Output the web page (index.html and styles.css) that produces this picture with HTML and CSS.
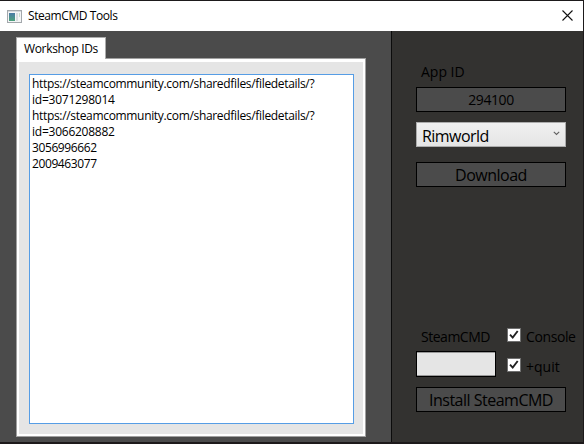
FILE: index.html
```html
<!DOCTYPE html>
<html lang="en">
<head>
<meta charset="utf-8">
<title>SteamCMD Tools</title>
<link rel="stylesheet" href="styles.css">
</head>
<body>
<div class="window">
  <header class="titlebar">
    <svg class="app-icon" width="15" height="13" viewBox="0 0 15 13">
      <defs><linearGradient id="pane" x1="0" y1="0" x2="0" y2="1"><stop offset="0" stop-color="#4b7ba6"/><stop offset="1" stop-color="#4da27c"/></linearGradient></defs>
      <rect x=".5" y=".5" width="14" height="12" fill="#f4f5f6" stroke="#a3a8ac"/>
      <rect x="1" y="1" width="13" height="1" fill="#d5d9dc"/>
      <rect x="2" y="3" width="6" height="8" fill="url(#pane)"/>
      <rect x="9" y="3" width="2" height="8" fill="#d9dcdf"/>
      <rect x="12" y="3" width="1" height="4" fill="#c9dccd"/>
    </svg>
    <h1 class="title"><span>SteamCMD Tools</span></h1>
    <svg class="close" width="11" height="11" viewBox="0 0 11 11"><path d="M.5 .5 10.5 10.5M10.5 .5 .5 10.5" stroke="#111" stroke-width="1.1"/></svg>
  </header>
  <main class="content">
    <section class="left">
      <div class="tab"><span>Workshop IDs</span></div>
      <div class="pane">
        <div class="ids"><span class="url">https://steamcommunity.com/sharedfiles/filedetails/?</span><br><span class="query">id=3071298014</span><br><span class="url">https://steamcommunity.com/sharedfiles/filedetails/?</span><br><span class="query">id=3066208882</span><br><span>3056996662</span><br><span>2009463077</span></div>
      </div>
    </section>
    <aside class="side">
      <div class="label app-label"><span>App ID</span></div>
      <div class="box app-id"><span>294100</span></div>
      <div class="select"><span>Rimworld</span>
        <svg width="7" height="5" viewBox="0 0 7 5"><path d="M.8 .8 3.5 3.5 6.2 .8" fill="none" stroke="#606060" stroke-width="1.1"/></svg>
      </div>
      <div class="box action"><span>Download</span></div>
      <div class="steam-row">
        <div class="steam-fields">
          <div class="label steam-label"><span>SteamCMD</span></div>
          <div class="input"></div>
        </div>
        <div class="checks">
          <div class="check"><svg width="14" height="14" viewBox="0 0 14 14"><rect x=".5" y=".5" width="13" height="13" fill="#fff" stroke="#707070"/><path d="M3 6.7 5.7 9.6 10.7 3" fill="none" stroke="#212121" stroke-width="1.9"/></svg><span class="console">Console</span></div>
          <div class="check"><svg width="14" height="14" viewBox="0 0 14 14"><rect x=".5" y=".5" width="13" height="13" fill="#fff" stroke="#707070"/><path d="M3 6.7 5.7 9.6 10.7 3" fill="none" stroke="#212121" stroke-width="1.9"/></svg><span class="quit">+quit</span></div>
        </div>
      </div>
      <div class="box action"><span>Install SteamCMD</span></div>
    </aside>
  </main>
</div>
</body>
</html>
```
FILE: styles.css
```css
* { box-sizing: border-box; }
body { margin: 0; font-family: "Open Sans", "Noto Sans", sans-serif; color: #000; }
svg { display: block; flex: none; }
.window { width: 584px; height: 444px; border: solid #1d1a1b; border-width: 1px 1px 2px 0; display: flex; flex-direction: column; overflow: hidden; }
.titlebar { height: 30px; background: #fff; display: flex; align-items: center; padding: 0 10px 0 7px; flex: none; }
.title { margin: 0 auto 0 6px; font-size: 12px; font-weight: 400; line-height: 30px; letter-spacing: -.42px; white-space: nowrap; }
.close { position: relative; top: -1px; }
.content { display: flex; flex: 1; }
.left { width: 391px; background: #4b4b4b; padding: 6px 0 0 16px; }
.tab { position: relative; width: 90px; height: 22px; margin-bottom: -1px; background: #fff; border: 1px solid #acacac; border-bottom: 0; padding-left: 7px; font-size: 12px; line-height: 21px; letter-spacing: -.34px; white-space: nowrap; }
.pane { width: 350px; height: 379px; background: #e5e5e5; border: 1px solid #a0a0a0; box-shadow: inset 0 0 0 2px #fff, inset 0 3px 0 #fff; padding: 15px 11px 12px 12px; }
.ids { height: 350px; background: #fff; border: 1px solid #569de5; padding: 1px 2px; font-size: 12px; line-height: 16px; letter-spacing: -.4px; white-space: nowrap; }
.url { letter-spacing: -.325px; }
.query { letter-spacing: -.24px; }
.side { width: 192px; background: #333230; border-left: 1px solid #0c0c0c; padding: 31px 0 0 24px; }
.label { font-size: 14px; line-height: 20px; padding-left: 5px; white-space: nowrap; }
.steam-label { letter-spacing: -.48px; }
.box { width: 150px; height: 25px; background: #4b4b4b; border: 1px solid #000; display: flex; align-items: center; justify-content: center; white-space: nowrap; font-size: 16px; line-height: 23px; }
.app-id { margin-top: 5px; font-size: 14px; letter-spacing: -.4px; }
.action { padding-top: 2px; letter-spacing: -.5px; }
.select { width: 150px; height: 25px; margin: 10px 0 15px; border: 1px solid #acacac; background: linear-gradient(#f0f0f0, #e5e5e5); display: flex; justify-content: space-between; padding: 2px 5px 0 5px; font-size: 16px; line-height: 22px; letter-spacing: -.55px; }
.select svg { margin-top: 6px; }
.steam-row { display: flex; margin-top: 140px; height: 60px; }
.steam-fields { width: 91px; }
.input { width: 80px; height: 26px; margin-top: 4px; background: #e5e5e5; border: 1px solid #000; box-shadow: inset 0 1px #999, inset 0 -1px #999; }
.check { display: flex; align-items: center; height: 16px; margin-bottom: 14px; font-size: 14px; line-height: 20px; white-space: nowrap; gap: 5px; }
.check span { margin-top: 3px; }
.console { letter-spacing: -.4px; }
```
